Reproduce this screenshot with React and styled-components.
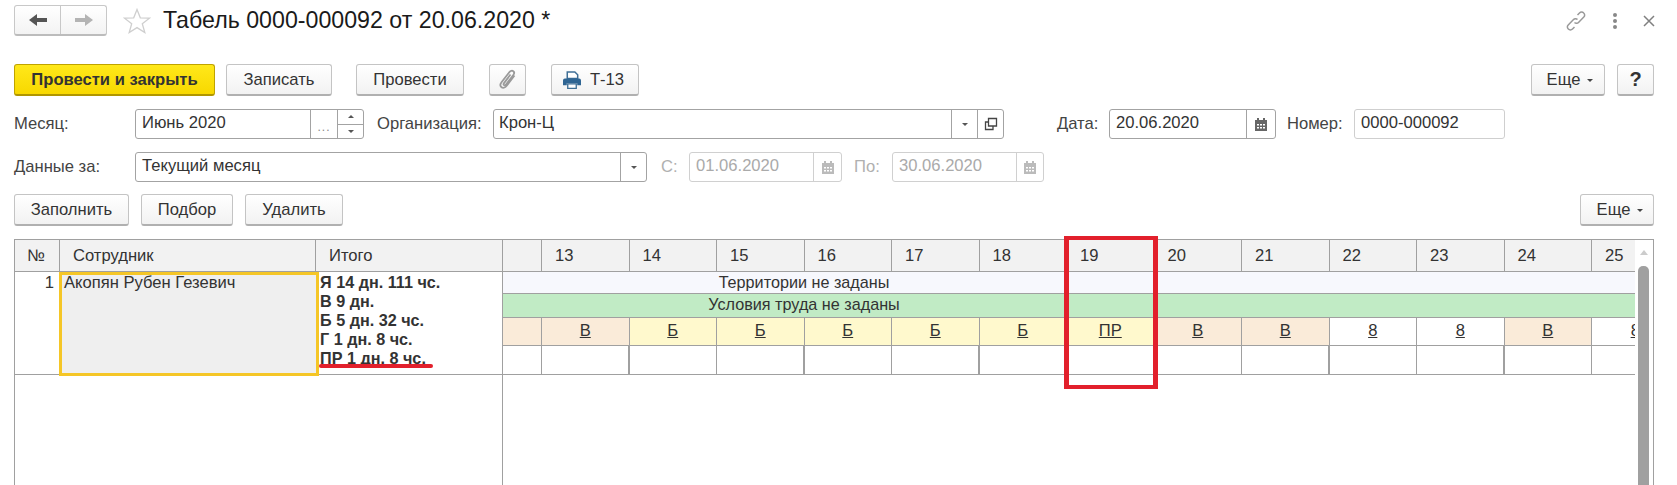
import React from "react";
import styled, { createGlobalStyle } from "styled-components";

const days = [13, 14, 15, 16, 17, 18, 19, 20, 21, 22, 23, 24, 25];
const marks = [
  { text: "В", tone: "#faebd9" },
  { text: "Б", tone: "#fff9cd" },
  { text: "Б", tone: "#fff9cd" },
  { text: "Б", tone: "#fff9cd" },
  { text: "Б", tone: "#fff9cd" },
  { text: "Б", tone: "#fff9cd" },
  { text: "ПР", tone: "#fff9cd" },
  { text: "В", tone: "#faebd9" },
  { text: "В", tone: "#faebd9" },
  { text: "8", tone: "#fff" },
  { text: "8", tone: "#fff" },
  { text: "В", tone: "#faebd9" },
  { text: "8", tone: "#fff" },
];
const thickLines = [0, 2, 4, 8, 10];
const totals = [
  "Я 14 дн. 111 чс.",
  "В 9 дн.",
  "Б 5 дн. 32 чс.",
  "Г 1 дн. 8 чс.",
  "ПР 1 дн. 8 чс.",
];

function App() {
  return (
    <>
      <GlobalStyle />
      <Page>
        <TitleBar>
          <NavGroup>
            <NavBtn>
              <svg width="18" height="14" viewBox="0 0 18 14">
                <path d="M0 7 8 1v4h10v4H8v4z" fill="#555" />
              </svg>
            </NavBtn>
            <NavBtn>
              <svg width="18" height="14" viewBox="0 0 18 14">
                <path d="M18 7 10 1v4H0v4h10v4z" fill="#b4b4b4" />
              </svg>
            </NavBtn>
          </NavGroup>
          <StarIcon width="28" height="28" viewBox="0 0 28 28">
            <path
              d="M14 2.5 17.3 10.8 26.5 11.2 19.3 16.8 21.8 25.5 14 20.6 6.2 25.5 8.7 16.8 1.5 11.2 10.7 10.8z"
              fill="#fff"
              stroke="#cfcfcf"
              strokeWidth="1.3"
            />
          </StarIcon>
          <Title>Табель 0000-000092 от 20.06.2020 *</Title>
          <WindowTools>
            <svg width="22" height="22" viewBox="0 0 22 22" fill="none" stroke="#999" strokeWidth="1.5">
              <path d="M9.5 12.5c1.3 1.3 3 1 4-.1l5.300-5.300c1.200-1.300 1.100-3-.1-4.100-1.200-1.200-3-1.200-4.200 0l-2 2" />
              <path d="M12.500 9.500c-1.300-1.300-3-1-4 .1l-5.300 5.300c-1.200 1.300-1.100 3 .1 4.100 1.200 1.200 3 1.200 4.200 0l2-2" />
            </svg>
            <Dots>
              <i />
              <i />
              <i />
            </Dots>
            <svg width="12" height="12" viewBox="0 0 12 12" stroke="#808080" strokeWidth="1.500">
              <path d="M1 1l10 10M11 1 1 11" />
            </svg>
          </WindowTools>
        </TitleBar>

        <Toolbar $top={28}>
          <Button $primary $width={201}>Провести и закрыть</Button>
          <Button $width={106} $gap={11}>Записать</Button>
          <Button $width={108} $gap={24}>Провести</Button>
          <Button $width={37} $gap={25}>
            <svg width="20" height="22" viewBox="0 0 20 22" fill="none" stroke="#9a9a9a" strokeWidth="1.800">
              <path d="M16.500 6.500 8.500 17c-1.500 2-3.700 2.200-5 1.200s-1.500-3 0-5L11.500 3c1-1.300 2.700-1.700 3.800-.8s1 2.500 0 3.800L8 15.500c-.6.800-1.500 1-2 .6s-.6-1.200 0-2l6.500-8.600" />
            </svg>
          </Button>
          <Button $width={88} $gap={25}>
            <svg width="20" height="18" viewBox="0 0 20 19">
              <path d="M5 1h8l3 3v4H5z" fill="#fff" stroke="#3f6f96" strokeWidth="1.600" />
              <path d="M2.500 8h15a2 2 0 0 1 2 2v5h-4v-2h-11v2H.5v-5a2 2 0 0 1 2-2z" fill="#2f6593" />
              <path d="M5.500 13.500h9v5h-9z" fill="#fff" stroke="#3f6f96" strokeWidth="1.400" />
            </svg>
            <ButtonCaption>Т-13</ButtonCaption>
          </Button>
          <Spacer />
          <MoreButton $width={74} $shift={4}>
            Еще
            <Caret />
          </MoreButton>
          <Button $width={37} $gap={12} $bold>?</Button>
        </Toolbar>

        <FieldRow $top={13}>
          <Label $width={121}>Месяц:</Label>
          <Field $width={229}>
            <FieldValue>Июнь 2020</FieldValue>
            <FieldBtn $width={27}><Ellipsis>...</Ellipsis></FieldBtn>
            <Spinner>
              <SpinPart><SmallArrow $up /></SpinPart>
              <SpinPart><SmallArrow /></SpinPart>
            </Spinner>
          </Field>
          <Label $width={116} $gap={13}>Организация:</Label>
          <Field $width={511}>
            <FieldValue $tight>Крон-Ц</FieldValue>
            <FieldBtn $width={26}><SmallArrow /></FieldBtn>
            <FieldBtn $width={26}>
              <svg width="14" height="14" viewBox="0 0 14 14" fill="none" stroke="#444" strokeWidth="1.300">
                <path d="M4.500 1.500h8v7.500h-8z" />
                <path d="M4.500 5H1.500v7.500h7.500V9" />
              </svg>
            </FieldBtn>
          </Field>
          <Label $width={52} $gap={53}>Дата:</Label>
          <Field $width={167}>
            <FieldValue>20.06.2020</FieldValue>
            <FieldBtn $width={29}><CalendarIcon color="#666" /></FieldBtn>
          </Field>
          <Label $width={67} $gap={11}>Номер:</Label>
          <Field $width={151} $soft>
            <FieldValue>0000-000092</FieldValue>
          </Field>
        </FieldRow>

        <FieldRow $top={13}>
          <Label $width={121}>Данные за:</Label>
          <Field $width={512}>
            <FieldValue>Текущий месяц</FieldValue>
            <FieldBtn $width={26}><SmallArrow /></FieldBtn>
          </Field>
          <Label $width={28} $gap={14} $muted>С:</Label>
          <Field $width={153} $muted>
            <FieldValue>01.06.2020</FieldValue>
            <FieldBtn $width={28} $muted><CalendarIcon color="#bbb" /></FieldBtn>
          </Field>
          <Label $width={38} $gap={12} $muted>По:</Label>
          <Field $width={152} $muted>
            <FieldValue>30.06.2020</FieldValue>
            <FieldBtn $width={27} $muted><CalendarIcon color="#bbb" /></FieldBtn>
          </Field>
        </FieldRow>

        <Toolbar $top={12}>
          <Button $width={115}>Заполнить</Button>
          <Button $width={92} $gap={12}>Подбор</Button>
          <Button $width={98} $gap={12}>Удалить</Button>
          <Spacer />
          <MoreButton $width={74} $shift={6}>
            Еще
            <Caret />
          </MoreButton>
        </Toolbar>

        <Table>
          <FrozenPart>
            <HeadRow>
              <HeadCell $width={45} $pad={12}>№</HeadCell>
              <HeadCell $width={256} $pad={13}>Сотрудник</HeadCell>
              <HeadCell $width={186} $pad={13}>Итого</HeadCell>
            </HeadRow>
            <PersonRow>
              <NumberCell>1</NumberCell>
              <PersonCell>Акопян Рубен Гезевич</PersonCell>
              <TotalCell>
                {totals.map((line) => (
                  <TotalLine key={line}>{line}</TotalLine>
                ))}
                <RedUnderline />
              </TotalCell>
            </PersonRow>
          </FrozenPart>

          <DaysPart>
            <HeadRow>
              <LeadHead />
              {days.map((day) => (
                <DayHead key={day}>{day}</DayHead>
              ))}
            </HeadRow>
            <Band $bg="#f7f8fd" $height={22}>
              <BandText>Территории не заданы</BandText>
            </Band>
            <Band $bg="#c1ebc5" $height={24}>
              <BandText>Условия труда не заданы</BandText>
            </Band>
            <CellRow $height={28}>
              <LeadCell $bg="#faebd9" />
              {marks.map((mark, i) => (
                <MarkCell key={i} $bg={mark.tone}>
                  <u>{mark.text}</u>
                </MarkCell>
              ))}
            </CellRow>
            <CellRow $height={29}>
              <LeadCell />
              {marks.map((mark, i) => (
                <MarkCell key={i} $thick={thickLines.includes(i)} />
              ))}
            </CellRow>
          </DaysPart>

          <ScrollBar>
            <ScrollUp />
            <ScrollThumb />
          </ScrollBar>
          <RedFrame />
        </Table>
      </Page>
    </>
  );
}

function CalendarIcon({ color }) {
  return (
    <svg width="12" height="13" viewBox="0 0 12 13">
      <path d="M0 2h2V0h2v2h4V0h2v2h2v11H0z" fill={color} />
      <path
        d="M2 6h2v1.500H2zM5 6h2v1.500H5zM8 6h2v1.500H8zM2 9h2v1.500H2zM5 9h2v1.500H5zM8 9h2v1.500H8z"
        fill="#fff"
      />
    </svg>
  );
}

const GlobalStyle = createGlobalStyle`
  html, body, #root {
    height: 100%;
    margin: 0;
  }

  body {
    overflow: hidden;
    background: #fff;
    color: #333;
    font-family: "Liberation Sans", Arial, sans-serif;
    font-size: 16.6px;
  }
`;

const Page = styled.div`
  display: flex;
  flex-direction: column;
  height: 100%;
  box-sizing: border-box;
  padding: 5px 23px 0 14px;
`;

const TitleBar = styled.div`
  display: flex;
  align-items: center;
  height: 31px;
`;

const NavGroup = styled.div`
  display: flex;
  width: 93px;
  height: 31px;
  box-sizing: border-box;
  border: 1px solid #c8c8c8;
  border-bottom: 2px solid #bcbcbc;
  border-radius: 3px;
  background: linear-gradient(#fff, #f3f3f3);
`;

const NavBtn = styled.div`
  flex: 1;
  display: flex;
  align-items: center;
  justify-content: center;

  &:first-child {
    border-right: 1px solid #c8c8c8;
  }
`;

const StarIcon = styled.svg`
  margin-left: 16px;
`;

const Title = styled.div`
  margin-left: 12px;
  font-size: 23.2px;
  color: #1a1a1a;
  white-space: nowrap;
`;

const WindowTools = styled.div`
  display: flex;
  align-items: center;
  margin-left: auto;
  margin-right: -1px;
  gap: 26px;
`;

const Dots = styled.div`
  display: flex;
  flex-direction: column;
  gap: 2px;

  i {
    display: block;
    width: 4px;
    height: 4px;
    border-radius: 50%;
    background: #888;
  }
`;

const Toolbar = styled.div`
  display: flex;
  margin-top: ${({ $top }) => $top}px;
`;

const Spacer = styled.div`
  flex: 1;
`;

const Button = styled.div`
  display: flex;
  align-items: center;
  justify-content: center;
  box-sizing: border-box;
  width: ${({ $width }) => $width}px;
  height: 32px;
  margin-left: ${({ $gap }) => $gap || 0}px;
  border: 1px solid ${({ $primary }) => ($primary ? "#bfa300" : "#c4c4c4")};
  border-bottom: 2px solid ${({ $primary }) => ($primary ? "#b09600" : "#b0b0b0")};
  border-radius: 3px;
  background: ${({ $primary }) =>
    $primary ? "linear-gradient(#ffe81a, #f8d800)" : "linear-gradient(#fff, #f2f2f2)"};
  color: #333;
  font-size: ${({ $bold }) => ($bold ? "20px" : "16.6px")};
  font-weight: ${({ $primary, $bold }) => ($primary || $bold ? 700 : 400)};
  white-space: nowrap;
`;

const MoreButton = styled(Button)`
  padding-left: ${({ $shift }) => $shift}px;
`;

const ButtonCaption = styled.span`
  margin: 0 4px 0 8px;
`;

const Caret = styled.span`
  width: 0;
  height: 0;
  margin-left: 7px;
  margin-top: 2px;
  border-left: 3px solid transparent;
  border-right: 3px solid transparent;
  border-top: 3px solid #444;
`;

const FieldRow = styled.div`
  display: flex;
  align-items: center;
  margin-top: ${({ $top }) => $top}px;
`;

const Label = styled.div`
  flex: none;
  width: ${({ $width }) => $width}px;
  margin-left: ${({ $gap }) => $gap || 0}px;
  color: ${({ $muted }) => ($muted ? "#b0b0b0" : "#444")};
  white-space: nowrap;
`;

const Field = styled.div`
  flex: none;
  display: flex;
  box-sizing: border-box;
  width: ${({ $width }) => $width}px;
  height: 30px;
  border: 1px solid ${({ $muted, $soft }) => ($muted ? "#d0d0d0" : $soft ? "#cfcfcf" : "#a3a3a3")};
  border-radius: 3px;
  color: ${({ $muted }) => ($muted ? "#aaa" : "#333")};
`;

const FieldValue = styled.div`
  flex: 1;
  min-width: 0;
  padding-left: ${({ $tight }) => ($tight ? 5 : 6)}px;
  line-height: 26px;
  white-space: nowrap;
`;

const FieldBtn = styled.div`
  flex: none;
  display: flex;
  align-items: center;
  justify-content: center;
  box-sizing: border-box;
  width: ${({ $width }) => $width}px;
  border-left: 1px solid ${({ $muted }) => ($muted ? "#d0d0d0" : "#a3a3a3")};
`;

const Ellipsis = styled.span`
  margin-top: 6px;
  color: #888;
  font-size: 12px;
  letter-spacing: 1px;
`;

const Spinner = styled.div`
  flex: none;
  display: flex;
  flex-direction: column;
  box-sizing: border-box;
  width: 26px;
  border-left: 1px solid #a3a3a3;
`;

const SpinPart = styled.div`
  flex: 1;
  display: flex;
  align-items: center;
  justify-content: center;

  &:first-child {
    border-bottom: 1px solid #a3a3a3;
  }
`;

const SmallArrow = styled.span`
  width: 0;
  height: 0;
  border-left: 3px solid transparent;
  border-right: 3px solid transparent;
  ${({ $up }) => ($up ? "border-bottom: 3px solid #555;" : "border-top: 3px solid #555;")}
`;

const Table = styled.div`
  position: relative;
  flex: 1;
  min-height: 0;
  display: flex;
  margin-top: 13px;
  border: 1px solid #a0a0a0;
  border-bottom: 0;
`;

const FrozenPart = styled.div`
  flex: none;
  width: 487px;
  border-right: 1px solid #a0a0a0;
`;

const HeadRow = styled.div`
  display: flex;
  height: 32px;
  box-sizing: border-box;
  background: #f2f2f2;
  border-bottom: 1px solid #a0a0a0;
`;

const HeadCell = styled.div`
  flex: none;
  box-sizing: border-box;
  width: ${({ $width }) => $width}px;
  padding-left: ${({ $pad }) => $pad}px;
  line-height: 31px;
  border-right: 1px solid #a0a0a0;

  &:last-child {
    border-right: 0;
  }
`;

const PersonRow = styled.div`
  position: relative;
  display: flex;
  height: 103px;
  box-sizing: border-box;
  border-bottom: 1px solid #a0a0a0;
`;

const NumberCell = styled.div`
  flex: none;
  width: 39px;
  padding-top: 1px;
  text-align: right;
`;

const PersonCell = styled.div`
  flex: none;
  box-sizing: border-box;
  width: 260px;
  height: 104px;
  margin-left: 5px;
  padding: 0 0 0 2px;
  line-height: 15px;
  border: 3px solid #f5c627;
  background: #efefef;
`;

const TotalCell = styled.div`
  position: relative;
  padding: 1px 0 0 1px;
`;

const TotalLine = styled.div`
  font-size: 16.2px;
  font-weight: 700;
  line-height: 19px;
`;

const RedUnderline = styled.div`
  position: absolute;
  left: 0;
  top: 92px;
  width: 114px;
  height: 4px;
  border-radius: 2px;
  background: #e2202c;
`;

const DaysPart = styled.div`
  flex: 1;
  min-width: 0;
  overflow: hidden;
`;

const LeadHead = styled.div`
  flex: none;
  width: 38px;
  border-right: 1px solid #a0a0a0;
`;

const DayHead = styled.div`
  flex: none;
  box-sizing: border-box;
  width: 87.5px;
  padding-left: 13px;
  line-height: 31px;
  border-right: 1px solid #a0a0a0;
`;

const Band = styled.div`
  box-sizing: border-box;
  height: ${({ $height }) => $height}px;
  background: ${({ $bg }) => $bg};
  border-bottom: 1px solid #a0a0a0;
`;

const BandText = styled.div`
  width: 602px;
  font-size: 16.2px;
  text-align: center;
  line-height: 20px;
`;

const CellRow = styled.div`
  display: flex;
  box-sizing: border-box;
  height: ${({ $height }) => $height}px;
  border-bottom: 1px solid #a0a0a0;
`;

const LeadCell = styled.div`
  flex: none;
  width: 38px;
  background: ${({ $bg }) => $bg || "#fff"};
  border-right: 1px solid #a0a0a0;
`;

const MarkCell = styled.div`
  flex: none;
  box-sizing: border-box;
  width: 87.5px;
  line-height: 26px;
  text-align: center;
  background: ${({ $bg }) => $bg || "#fff"};
  border-right: ${({ $thick }) => ($thick ? 2 : 1)}px solid #a0a0a0;
`;

const RedFrame = styled.div`
  position: absolute;
  left: 1049px;
  top: -4px;
  width: 94px;
  height: 153px;
  box-sizing: border-box;
  border-style: solid;
  border-color: #e2202c;
  border-width: 4px 5px;
`;

const ScrollBar = styled.div`
  flex: none;
  position: relative;
  width: 18px;
`;

const ScrollUp = styled.div`
  position: absolute;
  left: 5px;
  top: 10px;
  width: 0;
  height: 0;
  border-left: 4px solid transparent;
  border-right: 4px solid transparent;
  border-bottom: 5px solid #ccc;
`;

const ScrollThumb = styled.div`
  position: absolute;
  left: 3px;
  top: 26px;
  bottom: 0;
  width: 11px;
  border-radius: 5px 5px 0 0;
  background: #a0a0a0;
`;

export default App;
